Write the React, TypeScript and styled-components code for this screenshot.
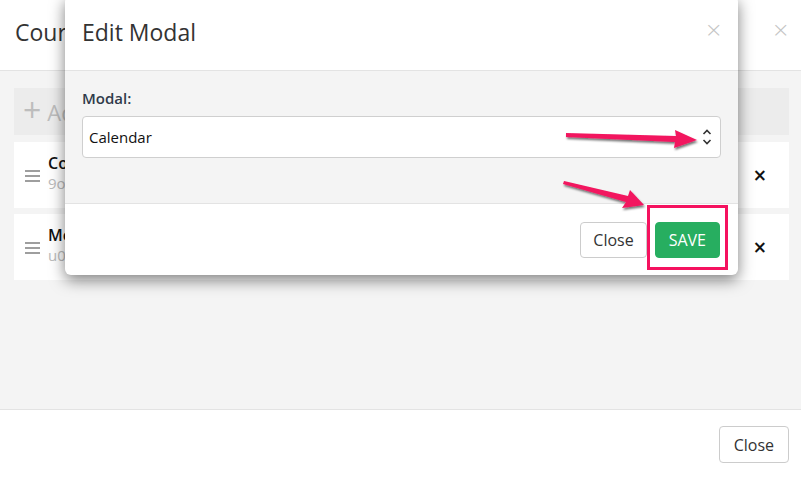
import React from "react";
import styled, { createGlobalStyle } from "styled-components";

const Global = createGlobalStyle`
  html, body { margin: 0; padding: 0; background: #fff; }
  body { font-family: "Open Sans", "Noto Sans", sans-serif; color: #333; overflow: hidden; }
  * { box-sizing: border-box; }
`;

const Page = styled.div`
  position: relative;
  width: 801px;
  height: 479px;
  display: flex;
  flex-direction: column;
  background: #fff;
`;

const Header = styled.div`
  height: 71px;
  flex: none;
  display: flex;
  align-items: center;
  justify-content: space-between;
  padding: 0 11px 0 15px;
  border-bottom: 1px solid #e3e3e3;
`;

const Title = styled.h4`
  margin: 0;
  font-size: 23px;
  font-weight: 500;
  color: #333;
  line-height: 1;
  margin-top: -6px;
`;

const CloseX = styled.span<{ $muted?: boolean }>`
  font-size: 22px;
  line-height: 1;
  color: ${(p) => (p.$muted ? "#c4c4c4" : "#111")};
  font-family: "DejaVu Sans", sans-serif;
  font-weight: 300;
  margin-top: -10px;
`;

const Body = styled.div`
  flex: 1;
  background: #f4f4f4;
  padding: 17px 12px 0 14px;
  display: flex;
  flex-direction: column;
  gap: 6px;
`;

const AddBar = styled.div`
  height: 47px;
  background: #ececec;
  display: flex;
  align-items: center;
  padding-left: 9px;
  gap: 6px;
  color: #bdbdbd;
  font-size: 22px;
  margin-bottom: 1px;
`;

const Plus = styled.span`
  font-size: 32px;
  font-weight: 500;
  line-height: 1;
  margin-top: -4px;
`;

const Item = styled.div`
  height: 66px;
  background: #fff;
  display: flex;
  align-items: center;
  padding: 0 22px 0 11px;
`;

const Burger = styled.div`
  width: 15px;
  display: flex;
  flex-direction: column;
  gap: 3px;
  margin-right: 8px;
  margin-top: 2px;
  span { display: block; height: 2px; background: #9e9e9e; }
`;

const ItemText = styled.div`
  flex: 1;
  display: flex;
  flex-direction: column;
  line-height: 1.3;
  margin-top: -4px;
`;

const ItemTitle = styled.div`
  font-size: 16px;
  font-weight: 600;
  color: #111;
`;

const ItemSub = styled.div`
  font-size: 15px;
  color: #bbb;
`;

const Remove = styled.span`
  font-size: 17px;
  font-weight: 700;
  color: #111;
  font-family: "DejaVu Sans", sans-serif;
`;

const Footer = styled.div`
  height: 70px;
  flex: none;
  border-top: 1px solid #e3e3e3;
  display: flex;
  align-items: center;
  justify-content: flex-end;
  padding: 0 12px 0 0;
`;

const Button = styled.button<{ $primary?: boolean }>`
  font-family: "Open Sans", sans-serif;
  font-size: 16px;
  height: 37px;
  padding: 0 14px;
  border-radius: 4px;
  cursor: pointer;
  border: 1px solid ${(p) => (p.$primary ? "#27ae60" : "#ccc")};
  background: ${(p) => (p.$primary ? "#27ae60" : "#fff")};
  color: ${(p) => (p.$primary ? "#fff" : "#333")};
  text-transform: ${(p) => (p.$primary ? "uppercase" : "none")};
`;

const DialogButton = styled(Button)`
  height: 36px;
  padding: 0 ${(p) => (p.$primary ? 13 : 12)}px;
`;

const Dialog = styled.div`
  position: absolute;
  left: 65px;
  top: -4px;
  width: 673px;
  background: #fff;
  border-radius: 6px;
  box-shadow: 0 5px 15px rgba(0, 0, 0, 0.5);
  overflow: hidden;
  display: flex;
  flex-direction: column;
`;

const DialogHeader = styled.div`
  height: 75px;
  padding: 4px 15px 0 17px;
  display: flex;
  align-items: center;
  justify-content: space-between;
  border-bottom: 1px solid #e3e3e3;
`;

const DialogBody = styled.div`
  background: #f4f4f4;
  padding: 17px 17px 45px 17px;
  display: flex;
  flex-direction: column;
  gap: 8px;
`;

const Label = styled.label`
  font-size: 15px;
  font-weight: 600;
  color: #2f3a4a;
  line-height: 20px;
`;

const Select = styled.div`
  height: 42px;
  background: #fff;
  border: 1px solid #cfcfcf;
  border-radius: 4px;
  display: flex;
  align-items: center;
  justify-content: space-between;
  padding: 0 8px 0 6px;
  font-size: 15px;
  color: #111;
`;

const DialogFooter = styled.div`
  height: 72px;
  border-top: 1px solid #e3e3e3;
  display: flex;
  align-items: center;
  justify-content: flex-end;
  gap: 8px;
  padding: 0 18px 0 0;
`;

const Highlight = styled.div`
  position: relative;
  display: flex;
  &::after {
    content: "";
    position: absolute;
    left: -8px;
    right: -8px;
    top: -17px;
    bottom: -12px;
    border: 3.5px solid #f5125f;
  }
`;

const Annotations = styled.svg`
  position: absolute;
  left: 0;
  top: 0;
  pointer-events: none;
`;

export default function App() {
  return (
    <>
      <Global />
      <Page>
        <Header>
          <Title>Course Modules</Title>
          <CloseX $muted>×</CloseX>
        </Header>
        <Body>
          <AddBar>
            <Plus>+</Plus>
            <span>Add Module</span>
          </AddBar>
          <Item>
            <Burger><span /><span /><span /></Burger>
            <ItemText>
              <ItemTitle>Course Content</ItemTitle>
              <ItemSub>9o2kd8s</ItemSub>
            </ItemText>
            <Remove>×</Remove>
          </Item>
          <Item>
            <Burger><span /><span /><span /></Burger>
            <ItemText>
              <ItemTitle>Modal</ItemTitle>
              <ItemSub>u0x7b3p</ItemSub>
            </ItemText>
            <Remove>×</Remove>
          </Item>
        </Body>
        <Footer>
          <Button>Close</Button>
        </Footer>

        <Dialog>
          <DialogHeader>
            <Title>Edit Modal</Title>
            <CloseX $muted>×</CloseX>
          </DialogHeader>
          <DialogBody>
            <Label>Modal:</Label>
            <Select>
              <span>Calendar</span>
              <svg width="10" height="18" viewBox="0 0 10 18">
                <path d="M1.5 6 L5 2.5 L8.5 6" fill="none" stroke="#333" strokeWidth="1.6" />
                <path d="M1.5 12 L5 15.5 L8.5 12" fill="none" stroke="#333" strokeWidth="1.6" />
              </svg>
            </Select>
          </DialogBody>
          <DialogFooter>
            <DialogButton>Close</DialogButton>
            <Highlight>
              <DialogButton $primary>Save</DialogButton>
            </Highlight>
          </DialogFooter>
        </Dialog>

        <Annotations width="801" height="479" viewBox="0 0 801 479">
          <defs>
            <filter id="sh" x="-20%" y="-50%" width="140%" height="200%">
              <feDropShadow dx="1" dy="2" stdDeviation="1.2" floodColor="#000" floodOpacity="0.55" />
            </filter>
          </defs>
          <g fill="#f2145e" filter="url(#sh)">
            <polygon points="566,133 676,136 675,130 697,140 674,148 675,142 566,137" />
            <polygon points="564,181 628,196 630,190 644,205 622,208 626,202 563,184" />
          </g>
        </Annotations>
      </Page>
    </>
  );
}
